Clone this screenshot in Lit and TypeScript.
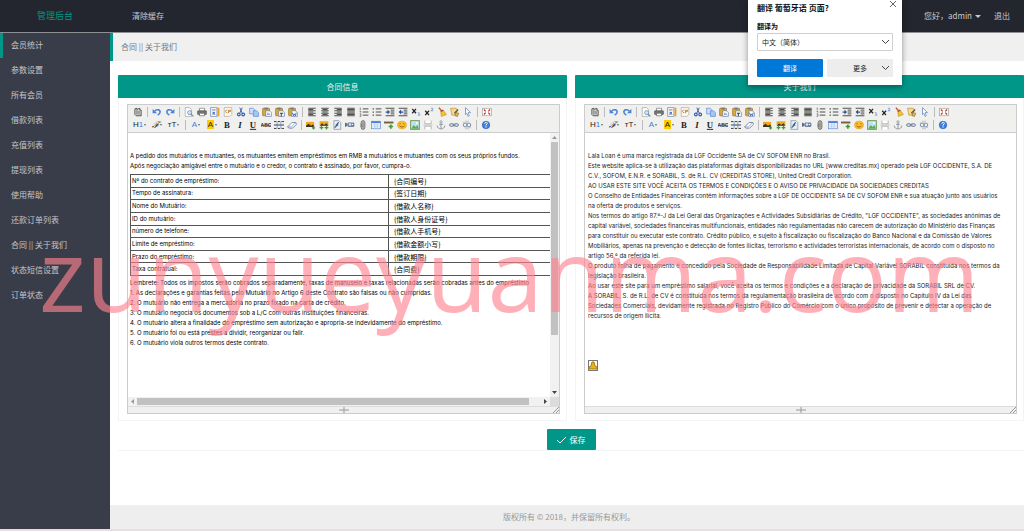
import { LitElement, html, css, svg } from "lit";
import { customElement, property } from "lit/decorators.js";
import { classMap } from "lit/directives/class-map.js";

const lines = (ys: number[], x1 = 2, x2 = 14) =>
  svg`<path d=${ys.map((y) => `M${x1} ${y}H${x2}`).join("")} stroke="#444" stroke-width="1.5"/>`;

const paste = (mark: unknown) => svg`
  <rect x="1" y="2" width="11" height="12" rx="1" fill="#d9a93a" stroke="#8a6a22"/>
  <rect x="4" y="1" width="5" height="3" fill="#777"/>
  <path d="M6 6h6l3 3v6H6z" fill="#fff" stroke="#5670a8"/>${mark}`;

const word = (t: string, extra = "", fill = "#222") => svg`
  <text x="8" y="13" text-anchor="middle" class=${"g " + extra} fill=${fill}>${t}</text>`;

const icons: Record<string, unknown> = {
  source: svg`<path d="M3 3l3-1v2l5-2v3h2v9H5L3 12z" fill="#ddd" stroke="#444" stroke-width="1.4"/><path d="M6 5v7M8 6v6M10 6v6" stroke="#555"/>`,
  undo: svg`<path d="M4 7c3-4 9-3 9 1 0 3-2 4-4 5" fill="none" stroke="#4a7fd6" stroke-width="2.4"/><path d="M1 3v7h7z" fill="#4a7fd6"/>`,
  redo: svg`<path d="M12 7C9 3 3 4 3 8c0 3 2 4 4 5" fill="none" stroke="#4a7fd6" stroke-width="2.4"/><path d="M15 3v7H8z" fill="#4a7fd6"/>`,
  preview: svg`<path d="M2 1h7l3 3v11H2z" fill="#fff" stroke="#999"/><circle cx="9" cy="9" r="3.2" fill="#d5e6f7" stroke="#6d8bab" stroke-width="1.3"/><path d="M11 11l4 4" stroke="#6d8bab" stroke-width="2"/>`,
  print: svg`<path d="M4 6V2h8v4" fill="#fff" stroke="#666"/><rect x="1" y="6" width="14" height="6" rx="1" fill="#777" stroke="#444"/><path d="M4 10h8v4H4z" fill="#fff" stroke="#555"/>`,
  template: svg`<path d="M1 1h10v14H1z" fill="#fff" stroke="#5670a8"/><path d="M3 4h6M3 6h6M3 12h6" stroke="#888"/><path d="M4 8h4v3H4z" fill="#4a7fd6"/><path d="M12 1h3v14h-3z" fill="#e0a030"/>`,
  code: svg`<path d="M2 1h12v11l-3 3H2z" fill="#fffdf5" stroke="#a59f8c"/><path d="M7 5c-4-1-4 5 0 4M9 5v5M9 5h3v2H9" fill="none" stroke="#c4762a" stroke-width="1.4"/>`,
  cut: svg`<path d="M6 1l4 9M10 1L6 10" stroke="#4a6ea8" stroke-width="1.6"/><circle cx="4.500" cy="12" r="2.200" fill="none" stroke="#2f5fb5" stroke-width="1.8"/><circle cx="11.500" cy="12" r="2.200" fill="none" stroke="#2f5fb5" stroke-width="1.8"/>`,
  copy: svg`<path d="M1 2h6l2 2v7H1z" fill="#cfe0f8" stroke="#4a7fd6"/><path d="M7 6h5l3 3v6H7z" fill="#a9c6f2" stroke="#4a7fd6"/>`,
  paste: paste(svg`<path d="M8 10h4M8 12h5" stroke="#5670a8"/>`),
  plain: paste(svg`<path d="M8 10h5M10 10v5" stroke="#222" stroke-width="1.4"/>`),
  wordpaste: paste(svg`<path d="M7 9l2 5 1-3 2 3 1-5" fill="none" stroke="#2f5fb5" stroke-width="1.4"/>`),
  left: svg`${lines([2, 6, 10, 14])}${lines([4, 8, 12], 2, 10)}`,
  center: svg`${lines([2, 6, 10, 14])}${lines([4, 8, 12], 4, 12)}`,
  right: svg`${lines([2, 6, 10, 14])}${lines([4, 8, 12], 6, 14)}`,
  full: lines([2, 4, 6, 8, 10, 12, 14]),
  ol: svg`${lines([3, 8, 13], 6, 15)}<path d="M2 1v4M1 7h2v2M1 11h2v4H1" fill="none" stroke="#444"/>`,
  ul: svg`${lines([3, 8, 13], 6, 15)}<path d="M1 3h2M1 8h2M1 13h2" stroke="#444" stroke-width="2"/>`,
  indent: svg`${lines([2, 14], 1, 15)}${lines([5, 8, 11], 9, 15)}<path d="M1 7h3V4l4 4-4 4V9H1z" fill="#2c4f96"/>`,
  outdent: svg`${lines([2, 14], 1, 15)}${lines([5, 8, 11], 9, 15)}<path d="M8 7H5V4L1 8l4 4V9h3z" fill="#2c4f96"/>`,
  sub: svg`<path d="M2 3l6 7M8 3l-6 7" stroke="#222" stroke-width="2"/><path d="M11 9h2v4M11 13h4" stroke="#4a7fd6" fill="none"/>`,
  sup: svg`<path d="M2 6l6 7M8 6l-6 7" stroke="#222" stroke-width="2"/><path d="M11 2h3v2l-3 2h4" stroke="#4a7fd6" fill="none"/>`,
  clear: svg`<path d="M3 1l5 6" stroke="#b5651d" stroke-width="2.400"/><path d="M6 7l4-2 5 7-8 3z" fill="#f2c230" stroke="#c98c14"/><path d="M6 7l4-2" stroke="#c0392b" stroke-width="2"/>`,
  quick: svg`<path d="M1 2h9l2 3-3 8H3z" fill="#f6d98a" stroke="#b98a2c"/><path d="M13 4L7 10" stroke="#555" stroke-width="2"/><path d="M9 9l5 1-2 5-4-1z" fill="#e3b45a" stroke="#8a6a22"/>`,
  select: svg`<path d="M4 1l8 8H8l2 5-2 1-2-5-2 2z" fill="#fff" stroke="#6d8bc0" stroke-width="1.300"/>`,
  screen: svg`<rect x="1" y="2" width="14" height="12" fill="#fff" stroke="#999"/><path d="M3 4l3 3M13 4l-3 3M3 12l3-3M13 12l-3-3" stroke="#c0392b" stroke-width="2"/>`,
  bold: word("B", "serif heavy"),
  italic: word("I", "serif heavy slant"),
  underline: svg`${word("U", "serif heavy")}<path d="M3 15H13" stroke="#222" stroke-width="1.500"/>`,
  strike: svg`<text x="8" y="11" text-anchor="middle" class="g small heavy" fill="#333">ABC</text><path d="M0 8.500H16" stroke="#333"/>`,
  lineheight: svg`<path d="M0 2.500h4M6 2.500h4M12 2.500h4M0 8h16M0 13.500h4M6 13.500h4M12 13.500h4" stroke="#333" stroke-width="1.500"/><path d="M5 3v10M11 3v10" stroke="#4a7fd6"/>`,
  eraser: svg`<path d="M1 11l7-7h6l1 3-6 6H3z" fill="#fff" stroke="#6d7fae" stroke-width="1.400"/><path d="M1 11h6l7-7" fill="none" stroke="#6d7fae"/>`,
  image: svg`<path d="M0 3h13v8H0z" fill="#f2a71b"/><path d="M0 11V9l4-3 4 3 3-2 2 2v2z" fill="#3b3226"/><path d="M12 10v5M9.500 12.500h5" stroke="#3c9a2e" stroke-width="2"/>`,
  images: svg`<path d="M1 2h14v7H1z" fill="#f2a71b"/><path d="M1 9l4-4 3 3 4-3 3 4z" fill="#3b3226"/><path d="M4 9v6M1 12h6M12 9v6M9 12h6" stroke="#3c9a2e" stroke-width="2"/>`,
  flash: svg`<path d="M3 1h8l3 3v11H3z" fill="#e8eef6" stroke="#71869f"/><path d="M11 4c-4 0-3 8-7 8M6 8h4" fill="none" stroke="#33577d" stroke-width="2"/>`,
  media: svg`<path d="M0 4l4 2v3l-4 2z" fill="#5b6f8a"/><rect x="4" y="4" width="11" height="7" rx="2" fill="#70839d"/><circle cx="8" cy="7" r="2" fill="#dbe5f0"/><circle cx="12" cy="7" r="1" fill="#fff"/>`,
  file: svg`<path d="M5 6v6a3 3 0 0 0 6 0V4a3 3 0 0 0-6 0v7" fill="#aaa" stroke="#777" stroke-width="1.500"/><path d="M8 5v7" stroke="#777"/>`,
  table: svg`<rect x="1" y="2" width="14" height="12" fill="#fff" stroke="#4a7fd6"/><path d="M1 3.500h14" stroke="#4a7fd6" stroke-width="3"/><path d="M1 8h14M1 11h14M6 5v9M10 5v9" stroke="#9dbbe8"/>`,
  hr: svg`<path d="M0 4h15" stroke="#7a5a3a" stroke-width="3"/><path d="M11 7v7M7.500 10.500h7" stroke="#3c9a2e" stroke-width="2.500"/>`,
  smile: svg`<ellipse cx="8" cy="8" rx="7" ry="6" fill="#fbc02d" stroke="#e09b12"/><path d="M4 6h2M10 6h2M4 9c1 3 7 3 8 0" fill="none" stroke="#8a4b08" stroke-width="1.300"/>`,
  map: svg`<rect x="1" y="1" width="14" height="14" fill="#bfe0f5" stroke="#6c9f52" stroke-width="1.500"/><path d="M2 14l4-6 3 3 3-3 2 6z" fill="#5fae45"/><circle cx="11" cy="5" r="1.500" fill="#fff"/>`,
  pagebreak: svg`<path d="M3 1v5h10V1M3 15v-5h10v5" fill="#fff" stroke="#aaa" stroke-width="1.300"/><path d="M1 8h14" stroke="#999" stroke-dasharray="2 1"/>`,
  anchor: svg`<circle cx="8" cy="3" r="1.800" fill="none" stroke="#8b95a3" stroke-width="1.300"/><path d="M8 5v9M5 7h6M2 9c0 7 12 7 12 0" fill="none" stroke="#8b95a3" stroke-width="1.500"/>`,
  link: svg`<rect x="1" y="6" width="7" height="4" rx="2" fill="none" stroke="#6b7f9b" stroke-width="1.600"/><rect x="8" y="6" width="7" height="4" rx="2" fill="none" stroke="#6b7f9b" stroke-width="1.600"/><path d="M5 8h6" stroke="#6b7f9b" stroke-width="1.500"/>`,
  unlink: svg`<circle cx="5" cy="8" r="3" fill="none" stroke="#7d8fa8" stroke-width="1.600"/><circle cx="11" cy="8" r="3" fill="none" stroke="#7d8fa8" stroke-width="1.600"/><path d="M6 1l1 3M10 1L9 4M6 15l1-3M10 15l-1-3M2 3l2 2M14 13l-2-2" stroke="#7d8fa8"/>`,
  about: svg`<circle cx="8" cy="8" r="6" fill="#3f7fe0" stroke="#2b5db0"/><path d="M6 6c0-3 5-3 4 0L8 8v1M8 10v2" fill="none" stroke="#fff" stroke-width="1.600"/>`,
};

type Tool = [string, string] | "|";
const rowOne: Tool[] = [
  ["source", "HTML代码"], "|", ["undo", "后退"], ["redo", "前进"], "|",
  ["preview", "预览"], ["print", "打印"], ["template", "插入模板"], ["code", "插入程序代码"], ["cut", "剪切"],
  ["copy", "复制"], ["paste", "粘贴"], ["plain", "粘贴为无格式文本"], ["wordpaste", "从Word粘贴"], "|",
  ["left", "左对齐"], ["center", "居中"], ["right", "右对齐"], ["full", "两端对齐"], ["ol", "编号"], ["ul", "项目符号"],
  ["indent", "增加缩进"], ["outdent", "减少缩进"], ["sub", "下标"], ["sup", "上标"], ["clear", "清理HTML代码"],
  ["quick", "一键排版"], ["select", "全选"], "|", ["screen", "全屏显示"],
];
const rowTwo: Tool[] = [
  ["bold", "粗体"], ["italic", "斜体"], ["underline", "下划线"], ["strike", "删除线"], ["lineheight", "行距"],
  ["eraser", "删除格式"], "|", ["image", "图片"], ["images", "批量图片上传"], ["flash", "Flash"], ["media", "视音频"],
  ["file", "插入文件"], ["table", "表格"], ["hr", "插入横线"], ["smile", "插入表情"], ["map", "百度地图"],
  ["pagebreak", "插入分页符"], ["anchor", "锚点"], ["link", "超级链接"], ["unlink", "取消超级链接"], "|", ["about", "关于"],
];

@customElement("rich-editor")
export class RichEditor extends LitElement {
  @property({ type: Boolean }) scrollbars = false;

  static styles = css`
    :host { display: flex; flex-direction: column; height: 310px; box-sizing: border-box; border: 1px solid #ccc; background: #fff; }
    .tools { background: #f0f0ee; border-bottom: 1px solid #ccc; padding: 0 0 1px 3px; overflow: hidden; }
    .row { display: flex; height: 13px; align-items: center; }
    button { flex: none; width: 13px; height: 13px; padding: 0; border: 0; background: none; display: flex; align-items: center; justify-content: center; color: #222; font: 8px "Liberation Sans", sans-serif; }
    button svg { width: 10px; height: 10px; display: block; }
    .sep { flex: none; width: 6px; height: 10px; display: flex; justify-content: center; }
    .sep::before { content: ""; width: 1px; background: #bbb; }
    .drop { width: 17px; }
    .color { width: 16px; }
    .drop::after, .color::after { content: ""; border: 1px solid transparent; border-top: 2px solid #666; border-bottom: 0; margin-left: 1px; }
    .blue { color: #3f7fe0; }
    .script { font: italic 9px "Liberation Serif", serif; }
    .mark { background: #fc0; padding: 0 1px; line-height: 9px; }
    .g { font: 14px "Liberation Sans", sans-serif; }
    .serif { font-family: "Liberation Serif", serif; font-size: 14px; }
    .small { font-size: 8px; }
    .heavy { font-weight: bold; }
    .slant { font-style: italic; }
    .body { flex: 1; min-height: 0; display: grid; grid-template: minmax(0, 1fr) / minmax(0, 1fr); }
    .body.bars { grid-template: minmax(0, 1fr) 9px / minmax(0, 1fr) 9px; }
    .page { overflow: hidden; }
    .track { background: #f1f1f1; display: flex; align-items: center; }
    .vertical { flex-direction: column; }
    .track svg { width: 9px; height: 9px; flex: none; }
    .thumb { background: #c1c1c1; }
    .vertical .thumb { width: 7px; height: 73%; }
    .vertical svg:last-child { margin-top: auto; }
    .horizontal .thumb { height: 7px; width: 93%; }
    .horizontal svg:last-child { margin-left: auto; }
    .corner { background: #dcdcdc; }
    .status { height: 6px; background: #f0f0ee; border-top: 1px solid #ddd; display: grid; grid-template-columns: 1fr auto 1fr; align-items: center; }
    .status svg { height: 6px; display: block; }
    .status .size { grid-column: 3; justify-self: end; }
    .status .grip { grid-column: 2; }
  `;

  private tool(t: Tool) {
    return t === "|"
      ? html`<span class="sep"></span>`
      : html`<button type="button" title=${t[1]} aria-label=${t[1]}><svg viewBox="0 0 16 16">${icons[t[0]]}</svg></button>`;
  }

  render() {
    return html`
      <div class="tools" role="toolbar" aria-label="编辑工具">
        <div class="row">${rowOne.map((t) => this.tool(t))}</div>
        <div class="row">
          <button type="button" class="drop" title="段落">H<span class="blue">1</span></button>
          <button type="button" class="drop" title="字体"><span class="script">ℱ</span></button>
          <button type="button" class="drop" title="文字大小">тT</button>
          <span class="sep"></span>
          <button type="button" class="color" title="文字颜色"><span class="blue">A</span></button>
          <button type="button" class="color" title="文字背景"><span class="mark">A</span></button>
          ${rowTwo.map((t) => this.tool(t))}
        </div>
      </div>
      <div class=${classMap({ body: true, bars: this.scrollbars })}>
        <div class="page"><slot></slot></div>
        ${this.scrollbars
          ? html`
              <div class="track vertical">
                <svg viewBox="0 0 9 9"><path d="M2 6l2.500-3L7 6z" fill="#999" /></svg>
                <span class="thumb"></span>
                <svg viewBox="0 0 9 9"><path d="M2 3l2.500 3L7 3z" fill="#444" /></svg>
              </div>
              <div class="track horizontal">
                <svg viewBox="0 0 9 9"><path d="M6 2L3 4.500L6 7z" fill="#999" /></svg>
                <span class="thumb"></span>
                <svg viewBox="0 0 9 9"><path d="M3 2l3 2.500L3 7z" fill="#444" /></svg>
              </div>
              <div class="corner"></div>`
          : ""}
      </div>
      <div class="status">
        <svg class="grip" viewBox="0 0 10 6" width="10"><path d="M0 3h10M5 0v6" stroke="#999" /></svg>
        <svg class="size" viewBox="0 0 6 6" width="6"><path d="M0 6l6-6M3 6l3-3" stroke="#999" fill="none" /></svg>
      </div>
    `;
  }
}

const menu = ["会员统计", "参数设置", "所有会员", "借款列表", "充值列表", "提现列表", "使用帮助", "还款订单列表", "合同 || 关于我们", "状态短信设置", "订单状态"];

const contractIntro = [
  "A pedido dos mutuários e mutuantes, os mutuantes emitem empréstimos em RMB a mutuários e mutuantes com os seus próprios fundos.",
  "Após negociação amigável entre o mutuário e o credor, o contrato é assinado, por favor, cumpra-o.",
];
const contractRows = [
  ["Nº do contrato de empréstimo:", "{合同编号}"],
  ["Tempo de assinatura:", "{签订日期}"],
  ["Nome do Mutuário:", "{借款人名称}"],
  ["ID do mutuário:", "{借款人身份证号}"],
  ["número de telefone:", "{借款人手机号}"],
  ["Limite de empréstimo:", "{借款金额小写}"],
  ["Prazo do empréstimo:", "{借款期限}"],
  ["Taxa contratual:", "{合同费}"],
];
const contractEnd = [
  "Lembrete: Todos os impostos serão cobrados separadamente, taxas de manuseio e taxas relacionadas serão cobradas antes do empréstimo",
  "1. As declarações e garantias feitas pelo Mutuário no Artigo 6 deste Contrato são falsas ou não cumpridas.",
  "2. O mutuário não entrega a mercadoria no prazo fixado na carta de crédito.",
  "3. O mutuário negocia os documentos sob a L/C com outras instituições financeiras.",
  "4. O mutuário altera a finalidade do empréstimo sem autorização e apropria-se indevidamente do empréstimo.",
  "5. O mutuário foi ou está prestes a dividir, reorganizar ou falir.",
  "6. O mutuário viola outros termos deste contrato.",
];
const about = [
  "Lala Loan é uma marca registrada da LGF Occidente SA de CV SOFOM ENR no Brasil.",
  "Este website aplica-se à utilização das plataformas digitais disponibilizadas no URL [www.creditas.mx] operado pela LGF OCCIDENTE, S.A. DE",
  "C.V., SOFOM, E.N.R. e SORABIL, S. de R.L. CV (CREDITAS STORE), United Credit Corporation.",
  "AO USAR ESTE SITE VOCÊ ACEITA OS TERMOS E CONDIÇÕES E O AVISO DE PRIVACIDADE DA SOCIEDADES CREDITAS",
  "O Conselho de Entidades Financeiras contém informações sobre a LGF DE OCCIDENTE SA DE CV SOFOM ENR e sua atuação junto aos usuários",
  "na oferta de produtos e serviços.",
  "Nos termos do artigo 87.º-J da Lei Geral das Organizações e Actividades Subsidiárias de Crédito, \"LGF OCCIDENTE\", as sociedades anónimas de",
  "capital variável, sociedades financeiras multifuncionais, entidades não regulamentadas não carecem de autorização do Ministério das Finanças",
  "para constituir ou executar este contrato. Crédito público, e sujeito à fiscalização ou fiscalização do Banco Nacional e da Comissão de Valores",
  "Mobiliários, apenas na prevenção e detecção de fontes ilícitas, terrorismo e actividades terroristas internacionais, de acordo com o disposto no",
  "artigo 56.º da referida lei.",
  "O produto folha de pagamento é concedido pela Sociedade de Responsabilidade Limitada de Capital Variável SORABIL constituída nos termos da",
  "legislação brasileira.",
  "Ao usar este site para um empréstimo salarial, você aceita os termos e condições e a declaração de privacidade da SORABIL SRL de CV.",
  "A SORABIL, S. de R.L. de CV é constituída nos termos da regulamentação brasileira de acordo com o disposto no Capítulo IV da Lei das",
  "Sociedades Comerciais, devidamente registrada no Registro Público do Comércio com o único propósito de prevenir e detectar a operação de",
  "recursos de origem ilícita.",
];

@customElement("app-root")
export class AppRoot extends LitElement {
  static styles = css`
    :host { display: flex; flex-direction: column; min-height: 100vh; box-sizing: border-box; border-bottom: 2px solid #ecdcdf; position: relative; overflow: hidden; background: #fff; font: 8px/12px "Noto Sans CJK SC", "Noto Sans", sans-serif; color: #333; }
    * { box-sizing: border-box; }
    a { color: inherit; text-decoration: none; }
    .top { height: 33px; background: #23262e; border-bottom: 1px solid #8d8f94; display: flex; align-items: center; color: #c8c9cc; }
    .brand { width: 110px; text-align: center; font-size: 9px; color: #009688; }
    .cache { margin-left: 22px; }
    .user { margin-left: auto; display: flex; align-items: center; gap: 3px; }
    .user svg { width: 6px; height: 3px; }
    .out { margin: 0 14px 0 13px; }
    .shell { flex: 1; display: grid; grid-template-columns: 110px minmax(0, 1fr); }
    nav { background: #393d49; color: #c4c6ca; }
    nav a { display: flex; align-items: center; height: 25px; padding: 0 0 2px 8px; border-left: 3px solid transparent; }
    nav a.on { border-left-color: #009688; }
    main { display: flex; flex-direction: column; }
    .crumb { height: 28px; background: #f0f0f0; border-left: 3px solid #009688; padding-left: 8px; display: flex; align-items: center; color: #777; }
    form { padding: 14px 0 0 8px; }
    .panels { display: grid; grid-template-columns: 1fr 1fr; gap: 8px; }
    .panel { border: 1px solid #f4f4f4; border-top: 0; }
    .panel h2 { margin: 0 -1px 6px; height: 23px; background: #009688; color: #e8f5f3; font-size: 8px; line-height: 23px; font-weight: normal; text-align: center; border-radius: 1px 1px 0 0; }
    .panel rich-editor { margin: 0 6px 6px 8px; }
    .doc { font: 6px/10px Inter, "Noto Sans CJK SC", sans-serif; white-space: nowrap; color: #000; }
    .contract { padding: 18px 0 0 2px; }
    .about { padding: 18px 0 0 3px; color: #222; }
    .doc p { margin: 0; }
    table { width: 440px; height: 102px; margin: 3px 0 2px; border-collapse: collapse; }
    td { border: 1px solid #555; padding: 0 0 0 1px; height: 12px; line-height: 10px; }
    td:first-child { width: 258px; }
    td + td { padding-left: 5px; font: 7px/10px "Noto Sans CJK SC", sans-serif; }
    .emoticon { display: block; width: 10px; height: 11px; margin-top: 39px; }
    .actions { display: flex; justify-content: center; padding: 8px 0 0; border-bottom: 1px solid #f4f4f4; }
    .save { display: flex; align-items: center; gap: 4px; height: 21px; padding: 0 10px; border: 0; border-radius: 1px; background: #009688; color: #fff; font: inherit; }
    .save svg { width: 9px; height: 8px; }
    footer { margin-top: auto; height: 24px; background: #eee; color: #999; display: flex; align-items: center; justify-content: center; padding-left: 4px; }
    .translate { position: absolute; top: 0; right: 122px; width: 154px; height: 85px; padding: 2px 9px 0; background: #fff; box-shadow: 0 2px 6px rgba(0, 0, 0, 0.4); color: #111; font-size: 7px; }
    .translate h1 { margin: 0; font-size: 8px; line-height: 12px; }
    .translate label { display: block; margin: 6px 0 1px; font-weight: bold; line-height: 12px; }
    .close { position: absolute; top: 0; right: 5px; width: 8px; height: 8px; padding: 0; border: 0; background: none; display: flex; }
    .field { display: grid; align-items: center; }
    .field > * { grid-area: 1 / 1; }
    select { appearance: none; width: 100%; height: 18px; border: 1px solid #d0d0d0; border-radius: 1px; background: #fff; padding: 0 4px; font: inherit; color: #222; }
    .chevron { width: 7px; height: 4px; }
    .field .chevron { justify-self: end; margin-right: 4px; pointer-events: none; }
    .choices { display: grid; grid-template-columns: 1fr 1fr; gap: 4px; margin-top: 8px; }
    .choices button { height: 18px; border: 0; border-radius: 1px; padding: 0 4px; font: inherit; background: #ededed; color: #222; display: grid; grid-template-columns: 1fr auto 1fr; align-items: center; }
    .choices button span { grid-column: 2; }
    .choices .chevron { justify-self: end; }
    .choices .go { background: #0078d7; color: #fff; }
    .watermark { position: absolute; left: 39px; top: 203px; margin: 0; font: 100px/140px "Open Sans", sans-serif; color: rgba(255, 130, 143, 0.64); white-space: nowrap; pointer-events: none; }
  `;

  render() {
    const chevron = html`<svg class="chevron" viewBox="0 0 7 4"><path d="M0 0l3.500 3.500L7 0" fill="none" stroke="#444" /></svg>`;
    return html`
      <header class="top">
        <a class="brand" href="#">管理后台</a>
        <a class="cache" href="#">清除缓存</a>
        <a class="user" href="#">您好，admin <svg viewBox="0 0 6 3"><path d="M0 0h6L3 3z" fill="#c8c9cc" /></svg></a>
        <a class="out" href="#">退出</a>
      </header>
      <div class="shell">
        <nav>${menu.map((m, i) => html`<a href="#" class=${classMap({ on: i === 0 })}>${m}</a>`)}</nav>
        <main>
          <div class="crumb">合同 || 关于我们</div>
          <form @submit=${(e: Event) => e.preventDefault()}>
            <div class="panels">
              <section class="panel">
                <h2>合同信息</h2>
                <rich-editor scrollbars>
                  <div class="doc contract">
                    ${contractIntro.map((l) => html`<p>${l}</p>`)}
                    <table>
                      <tbody>${contractRows.map((r) => html`<tr><td>${r[0]}</td><td>${r[1]}</td></tr>`)}</tbody>
                    </table>
                    ${contractEnd.map((l) => html`<p>${l}</p>`)}
                  </div>
                </rich-editor>
              </section>
              <section class="panel">
                <h2>关于我们</h2>
                <rich-editor>
                  <div class="doc about">
                    ${about.map((l) => html`<p>${l}</p>`)}
                    <svg class="emoticon" viewBox="0 0 10 11">
                      <rect x="0" y="0" width="10" height="11" fill="#fff" stroke="#777" stroke-width="2" />
                      <path d="M4 2h2l1 4 2 1v2H1V7l2-1z" fill="#e6b422" stroke="#a67c10" />
                    </svg>
                  </div>
                </rich-editor>
              </section>
            </div>
            <div class="actions">
              <button class="save" type="submit">
                <svg viewBox="0 0 9 8"><path d="M0 4l3 3 6-6" fill="none" stroke="#fff" /></svg>保存
              </button>
            </div>
          </form>
          <footer>版权所有 © 2018，并保留所有权利。</footer>
        </main>
      </div>
      <p class="watermark">zunyueyuanma.com</p>
      <div class="translate" role="dialog" aria-label="翻译">
        <button class="close" type="button" aria-label="关闭">
          <svg viewBox="0 0 8 8"><path d="M1 1l6 6M7 1l-6 6" stroke="#666" /></svg>
        </button>
        <h1>翻译 葡萄牙语 页面?</h1>
        <label for="lang">翻译为</label>
        <div class="field">
          <select id="lang"><option>中文（简体）</option></select>${chevron}
        </div>
        <div class="choices">
          <button type="button" class="go"><span>翻译</span></button>
          <button type="button"><span>更多</span>${chevron}</button>
        </div>
      </div>
    `;
  }
}
